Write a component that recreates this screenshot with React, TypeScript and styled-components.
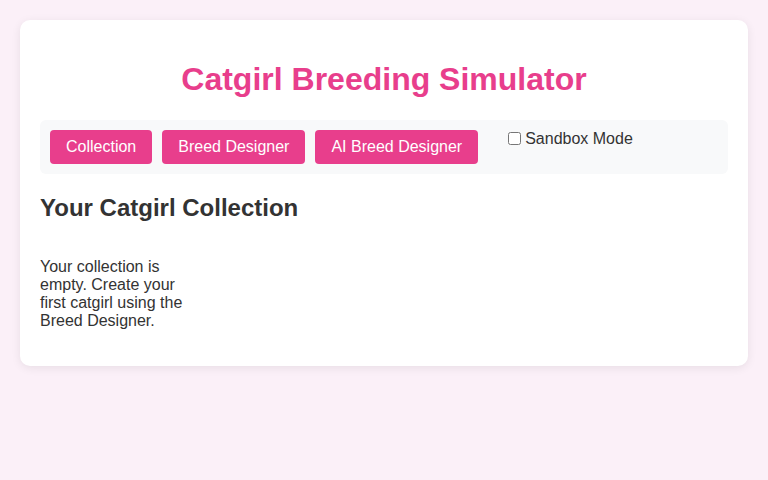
import * as React from "react"
import styled, { createGlobalStyle } from "styled-components"

const GlobalStyle = createGlobalStyle`
  body {
    margin: 0;
    padding: 20px;
    background: #fbf0f8;
    font-family: "Liberation Sans", Arial, sans-serif;
    color: #333;
  }
`

const Card = styled.div`
  background: #fff;
  border-radius: 10px;
  padding: 20px;
  box-shadow: 0 2px 10px rgba(0, 0, 0, 0.08);
`

const Title = styled.h1`
  font-size: 32px;
  color: #e83e8c;
  text-align: center;
  margin: 21.4px 0;
`

const Nav = styled.div`
  display: flex;
  align-items: flex-start;
  gap: 10px;
  background: #f8f9fa;
  border-radius: 6px;
  padding: 10px;
`

const NavButton = styled.button`
  background: #e83e8c;
  color: #fff;
  border: none;
  border-radius: 4px;
  padding: 8px 16px;
  font-family: inherit;
  font-size: 16px;
  line-height: 18.4px;
  cursor: pointer;
`

const SandboxLabel = styled.label`
  margin-left: 16px;
  font-size: 16px;
  line-height: 18px;
  color: #333;
  display: flex;
  align-items: center;

  input {
    margin: 0 4px 0 4px;
    width: 13px;
    height: 13px;
  }
`

const SectionTitle = styled.h2`
  font-size: 24px;
  margin: 20px 0;
  color: #333;
`

const Grid = styled.div`
  display: grid;
  grid-template-columns: repeat(auto-fill, minmax(150px, 1fr));
  gap: 20px;
`

const Empty = styled.p`
  margin: 16px 0;
  font-size: 16px;
  line-height: 18px;
  color: #333;
`

export default function App() {
  return (
    <>
      <GlobalStyle />
      <Card>
        <Title>Catgirl Breeding Simulator</Title>
        <Nav>
          <NavButton>Collection</NavButton>
          <NavButton>Breed Designer</NavButton>
          <NavButton>AI Breed Designer</NavButton>
          <SandboxLabel>
            <input type="checkbox" />
            Sandbox Mode
          </SandboxLabel>
        </Nav>
        <SectionTitle>Your Catgirl Collection</SectionTitle>
        <Grid>
          <Empty>
            Your collection is empty. Create your first catgirl using the Breed Designer.
          </Empty>
        </Grid>
      </Card>
    </>
  )
}
